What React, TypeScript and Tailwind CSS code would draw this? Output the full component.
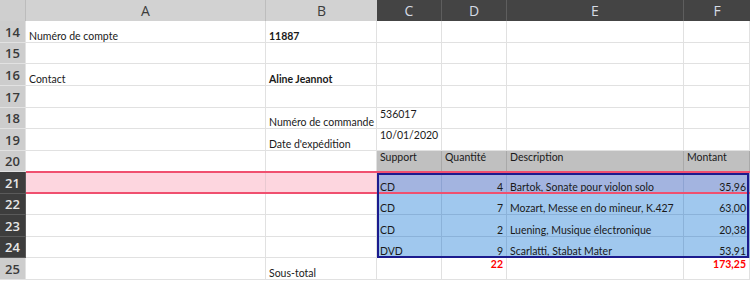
import React from 'react'

type CellSpec = {
  t?: string
  top?: boolean
  right?: boolean
  b?: boolean
  red?: boolean
  bg?: string
  bd?: string
}

const W = ['w-[240px]', 'w-[111px]', 'w-[65px]', 'w-[65px]', 'w-[177px]', 'w-[66px]']

const head: CellSpec = { top: true, bg: 'bg-[#c0c0c0]', bd: 'border-[#a9a9a9]' }
const pink: CellSpec = { bg: 'bg-[#fdd6df]', bd: 'border-[#e9c9d1]' }
const violet: CellSpec = { bg: 'bg-[#a3b4e0]', bd: 'border-[#8ea3d2]' }
const blue: CellSpec = { bg: 'bg-[#a0c8ee]', bd: 'border-[#8bb2d9]' }

const rows: { n: number; h: string; dark?: boolean; cells: CellSpec[] }[] = [
  { n: 14, h: 'h-[22px]', cells: [{ t: 'Numéro de compte' }, { t: '11887', b: true }, {}, {}, {}, {}] },
  { n: 15, h: 'h-[21px]', cells: [{}, {}, {}, {}, {}, {}] },
  { n: 16, h: 'h-[22px]', cells: [{ t: 'Contact' }, { t: 'Aline Jeannot', b: true }, {}, {}, {}, {}] },
  { n: 17, h: 'h-[22px]', cells: [{}, {}, {}, {}, {}, {}] },
  { n: 18, h: 'h-[21px]', cells: [{}, { t: 'Numéro de commande' }, { t: '536017', top: true }, {}, {}, {}] },
  { n: 19, h: 'h-[22px]', cells: [{}, { t: "Date d'expédition" }, { t: '10/01/2020', top: true }, {}, {}, {}] },
  {
    n: 20,
    h: 'h-[21px]',
    cells: [{}, {}, { ...head, t: 'Support' }, { ...head, t: 'Quantité' }, { ...head, t: 'Description' }, { ...head, t: 'Montant' }],
  },
  {
    n: 21,
    h: 'h-[22px]',
    dark: true,
    cells: [pink, pink, { ...violet, t: 'CD' }, { ...violet, t: '4', right: true }, { ...violet, t: 'Bartok, Sonate pour violon solo' }, { ...violet, t: '35,96', right: true }],
  },
  {
    n: 22,
    h: 'h-[21px]',
    dark: true,
    cells: [{}, {}, { ...blue, t: 'CD' }, { ...blue, t: '7', right: true }, { ...blue, t: 'Mozart, Messe en do mineur, K.427' }, { ...blue, t: '63,00', right: true }],
  },
  {
    n: 23,
    h: 'h-[22px]',
    dark: true,
    cells: [{}, {}, { ...blue, t: 'CD' }, { ...blue, t: '2', right: true }, { ...blue, t: 'Luening, Musique électronique' }, { ...blue, t: '20,38', right: true }],
  },
  {
    n: 24,
    h: 'h-[21px]',
    dark: true,
    cells: [{}, {}, { ...blue, t: 'DVD' }, { ...blue, t: '9', right: true }, { ...blue, t: 'Scarlatti, Stabat Mater' }, { ...blue, t: '53,91', right: true }],
  },
  {
    n: 25,
    h: 'h-[22px]',
    cells: [{}, { t: 'Sous-total' }, {}, { t: '22', top: true, right: true, b: true, red: true }, {}, { t: '173,25', top: true, right: true, b: true, red: true }],
  },
]

function Cell({ c, i }: { c: CellSpec; i: number }) {
  return (
    <div
      className={`${W[i]} shrink-0 h-full flex overflow-visible whitespace-nowrap border-r border-b ${c.bd ?? 'border-[#e1e1e1]'} ${c.bg ?? 'bg-white'} ${
        c.top ? 'items-start' : 'items-end'
      } ${c.right ? 'justify-end pr-[3px]' : 'pl-[3px]'} ${c.b ? 'font-bold' : ''} ${c.red ? 'text-[#ff0000]' : 'text-[#1a1a1a]'}`}
    >
      {c.t}
    </div>
  )
}

export default function App() {
  return (
    <div className="relative w-[750px] h-[281px] bg-white overflow-hidden font-['Lato',sans-serif] text-[10.5px] leading-[12px]">
      <div className="flex h-[21px] font-['Open_Sans',sans-serif] text-[14px]">
        <div className="w-[26px] shrink-0 bg-[#cfcfcf] border-r border-[#bcbcbc]" />
        <div className="w-[240px] shrink-0 bg-[#d2d2d2] border-r border-[#bdbdbd] flex items-center justify-center text-[#3c3c3c]">A</div>
        <div className="w-[111px] shrink-0 bg-[#d2d2d2] flex items-center justify-center text-[#3c3c3c]">B</div>
        <div className="w-[65px] shrink-0 bg-[#444444] border-r border-[#5e5e5e] flex items-center justify-center text-[#d6dbe4]">C</div>
        <div className="w-[65px] shrink-0 bg-[#444444] border-r border-[#5e5e5e] flex items-center justify-center text-[#d6dbe4]">D</div>
        <div className="w-[177px] shrink-0 bg-[#444444] border-r border-[#5e5e5e] flex items-center justify-center text-[#d6dbe4]">E</div>
        <div className="w-[66px] shrink-0 bg-[#444444] flex items-center justify-center text-[#d6dbe4]">F</div>
      </div>

      {rows.map((r) => (
        <div key={r.n} className={`flex ${r.h}`}>
          <div
            className={`w-[26px] shrink-0 h-full flex items-center justify-center font-['Open_Sans',sans-serif] font-semibold text-[13px] border-r border-b ${
              r.dark ? 'bg-[#3d3d3d] text-[#e8e8e8] border-[#5a5a5a]' : 'bg-[#cdcdcd] text-[#3a3a3a] border-[#e2e2e2]'
            }`}
          >
            {r.n}
          </div>
          {r.cells.map((c, i) => (
            <Cell key={i} c={c} i={i} />
          ))}
        </div>
      ))}

      {/* selected row highlight */}
      <div className="absolute left-[26px] top-[171px] w-[724px] h-[23px] border-y-2 border-[#f0506f] pointer-events-none" />
      {/* selected range */}
      <div className="absolute left-[377px] top-[173px] w-[372px] h-[85px] border-2 border-[#1b1b8e] pointer-events-none" />
    </div>
  )
}
